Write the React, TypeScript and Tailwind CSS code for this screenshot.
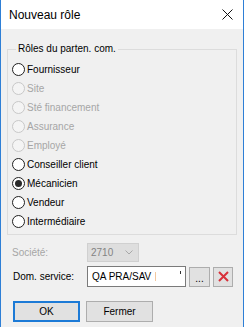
import React from "react";

function Radio({ label, disabled, checked }: { label: string; disabled?: boolean; checked?: boolean }) {
  return (
    <div className="flex items-center h-[19px] gap-[2px]">
      <span
        className={
          disabled
            ? "w-[13px] h-[13px] rounded-full border border-[#c8c8c8] bg-[#f4f4f4] flex items-center justify-center"
            : "w-[13px] h-[13px] rounded-full border border-[#202020] bg-white flex items-center justify-center"
        }
      >
        {checked && <span className="w-[7px] h-[7px] rounded-full bg-[#2a2a2a]" />}
      </span>
      <span className={disabled ? "text-[#a6a6a6]" : "text-black"}>{label}</span>
    </div>
  );
}

export default function App() {
  const roles: { label: string; disabled?: boolean; checked?: boolean }[] = [
    { label: "Fournisseur" },
    { label: "Site", disabled: true },
    { label: "Sté financement", disabled: true },
    { label: "Assurance", disabled: true },
    { label: "Employé", disabled: true },
    { label: "Conseiller client" },
    { label: "Mécanicien", checked: true },
    { label: "Vendeur" },
    { label: "Intermédiaire" },
  ];
  return (
    <div
      className="w-[244px] h-[327px] bg-[#f0f0f0] border-x border-[#2e7fd6] flex flex-col overflow-hidden text-[10px] leading-[12px]"
      style={{ fontFamily: '"Liberation Sans", Arial, sans-serif' }}
    >
      <div className="h-[29px] bg-white flex items-center justify-between pl-[8px] pr-[10px] shrink-0">
        <span className="text-[12px] leading-[14px] text-black">Nouveau rôle</span>
        <svg width="11" height="11" viewBox="0 0 11 11">
          <path d="M0.5 0.5 L10.5 10.5 M10.5 0.5 L0.5 10.5" stroke="#111" strokeWidth="1" />
        </svg>
      </div>

      <fieldset className="mx-[6px] mt-[14px] border border-[#dcdcdc] pl-[4px] pb-[4px] h-[192px]">
        <legend className="ml-[4px] px-[2px] leading-[12px] text-black">Rôles du parten. com.</legend>
        <div className="mt-[5px] flex flex-col">
          {roles.map((r) => (
            <Radio key={r.label} label={r.label} disabled={r.disabled} checked={r.checked} />
          ))}
        </div>
      </fieldset>

      <div className="flex items-center pl-[11px] mt-[8px] h-[19px]">
        <span className="w-[75px] text-[#a6a6a6]">Société:</span>
        <div className="w-[52px] h-[19px] bg-[#dedede] border border-[#d0d0d0] flex items-center justify-between pl-[3px] pr-[5px]">
          <span className="text-[#838383]">2710</span>
          <svg width="8" height="5" viewBox="0 0 8 5">
            <path d="M0.5 0.5 L4 4 L7.5 0.5" fill="none" stroke="#a8a8a8" strokeWidth="1" />
          </svg>
        </div>
      </div>

      <div className="flex items-center pl-[12px] mt-[4px] h-[21px]">
        <span className="w-[74px] text-black">Dom. service:</span>
        <div className="w-[99px] h-[21px] bg-white border border-[#7a7a7a] flex items-center pl-[4px] relative">
          <span className="text-black">QA PRA/SAV</span>
          <span className="ml-[4px] w-[1px] h-[9px] bg-[#f3c9a0]" />
          <span className="absolute right-[4px] top-[4px] w-[1px] h-[3px] bg-[#333]" />
        </div>
        <div className="ml-[3px] w-[21px] h-[20px] bg-[#e1e1e1] border border-[#adadad] flex items-end justify-center pb-[3px]">
          <span className="leading-[8px] text-black">...</span>
        </div>
        <div className="ml-[3px] w-[20px] h-[20px] bg-[#e1e1e1] border border-[#adadad] flex items-center justify-center">
          <svg width="11" height="11" viewBox="0 0 11 11">
            <path d="M1 1 L10 10 M10 1 L1 10" stroke="#d8303a" strokeWidth="2" />
          </svg>
        </div>
      </div>

      <div className="flex items-center pl-[12px] mt-[14px] gap-[6px]">
        <div className="w-[67px] h-[21px] bg-[#e1e1e1] border-2 border-[#1c7ad6] flex items-center justify-center text-black">
          OK
        </div>
        <div className="w-[67px] h-[21px] bg-[#e1e1e1] border border-[#adadad] flex items-center justify-center text-black">
          Fermer
        </div>
      </div>
    </div>
  );
}
